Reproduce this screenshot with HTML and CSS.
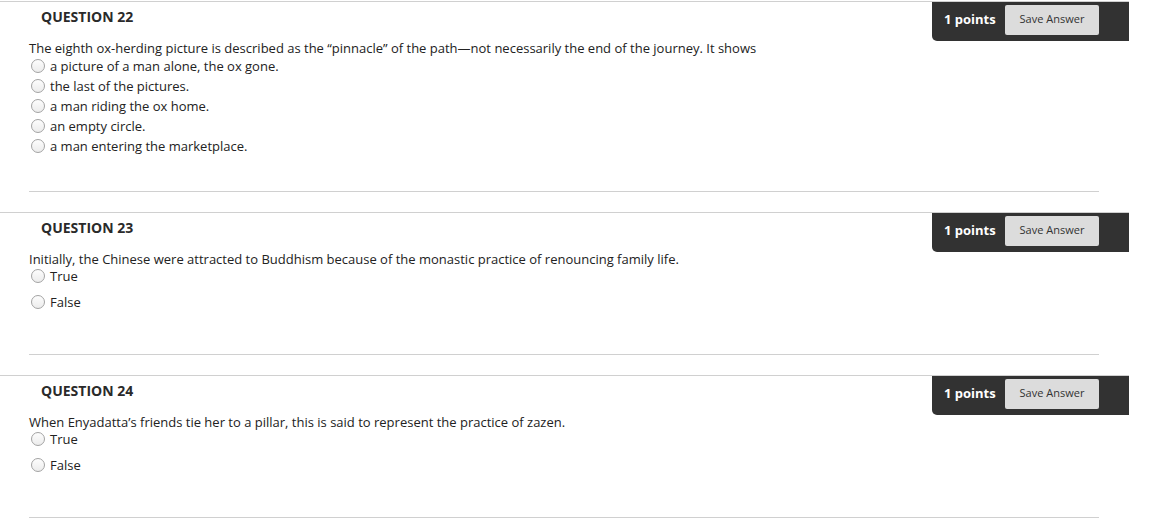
FILE: index.html
```html
<!DOCTYPE html>
<html>
<head>
<meta charset="utf-8">
<link rel="stylesheet" href="styles.css">
</head>
<body>
<div class="question">
  <div class="q-header">
    <h3 class="q-title">QUESTION 22</h3>
    <div class="q-points">
      <span class="points">1 points</span>
      <button class="save">Save Answer</button>
    </div>
  </div>
  <div class="q-body mc">
    <div class="q-text">The eighth ox-herding picture is described as the “pinnacle” of the path—not necessarily the end of the journey. It shows</div>
    <div class="opt"><span class="radio"></span>a picture of a man alone, the ox gone.</div>
    <div class="opt"><span class="radio"></span>the last of the pictures.</div>
    <div class="opt"><span class="radio"></span>a man riding the ox home.</div>
    <div class="opt"><span class="radio"></span>an empty circle.</div>
    <div class="opt"><span class="radio"></span>a man entering the marketplace.</div>
  </div>
</div>
<div class="question">
  <div class="q-header">
    <h3 class="q-title">QUESTION 23</h3>
    <div class="q-points">
      <span class="points">1 points</span>
      <button class="save">Save Answer</button>
    </div>
  </div>
  <div class="q-body tf">
    <div class="q-text">Initially, the Chinese were attracted to Buddhism because of the monastic practice of renouncing family life.</div>
    <div class="opt"><span class="radio"></span>True</div>
    <div class="opt"><span class="radio"></span>False</div>
  </div>
</div>
<div class="question">
  <div class="q-header">
    <h3 class="q-title">QUESTION 24</h3>
    <div class="q-points">
      <span class="points">1 points</span>
      <button class="save">Save Answer</button>
    </div>
  </div>
  <div class="q-body tf">
    <div class="q-text">When Enyadatta’s friends tie her to a pillar, this is said to represent the practice of zazen.</div>
    <div class="opt"><span class="radio"></span>True</div>
    <div class="opt"><span class="radio"></span>False</div>
  </div>
</div>
</body>
</html>
```

FILE: styles.css
```css
* { box-sizing: border-box; }
html, body { margin: 0; padding: 0; background: #fff; }
body {
  font-family: "Open Sans", "Liberation Sans", sans-serif;
  color: #222;
  font-size: 13px;
  padding-top: 1px;
}
.question {
  border-top: 1px solid #d0d0d0;
  width: 1129px;
  margin-bottom: 20px;
}
.q-header {
  display: flex;
  justify-content: space-between;
  align-items: flex-start;
  height: 39px;
}
.q-title {
  margin: 5px 0 0 41px;
  font-size: 14px;
  line-height: 20px;
  font-weight: 700;
  color: #2a2a2a;
}
.q-points {
  width: 197px;
  height: 39px;
  background: #323232;
  border-radius: 0 0 0 5px;
  display: flex;
  align-items: flex-start;
  padding: 3px 0 0 12px;
}
.points {
  color: #fff;
  font-weight: 700;
  font-size: 13px;
  line-height: 29px;
  width: 61px;
}
.save {
  font-family: "Open Sans", "Liberation Sans", sans-serif;
  background: #dcdcdc;
  border: none;
  border-radius: 2px;
  width: 94px;
  height: 30px;
  font-size: 11px;
  line-height: 28px;
  color: #333;
  padding: 0 0 2px;
}
.q-body {
  margin: -1px 0 0 29px;
  width: 1070px;
  border-bottom: 1px solid #d0d0d0;
}
.q-text {
  line-height: 16px;
}
.opt {
  display: flex;
  align-items: center;
}
.mc { padding-bottom: 35px; }
.mc .opt { height: 20px; }
.tf { padding-bottom: 43px; }
.tf .opt { height: 18px; }
.tf .opt + .opt { margin-top: 8px; }
.radio {
  width: 14px;
  height: 14px;
  border-radius: 50%;
  border: 1px solid #a3a3a3;
  background: linear-gradient(#fdfdfd, #ececec);
  margin: 0 5px 0 2px;
  flex: none;
}
```
